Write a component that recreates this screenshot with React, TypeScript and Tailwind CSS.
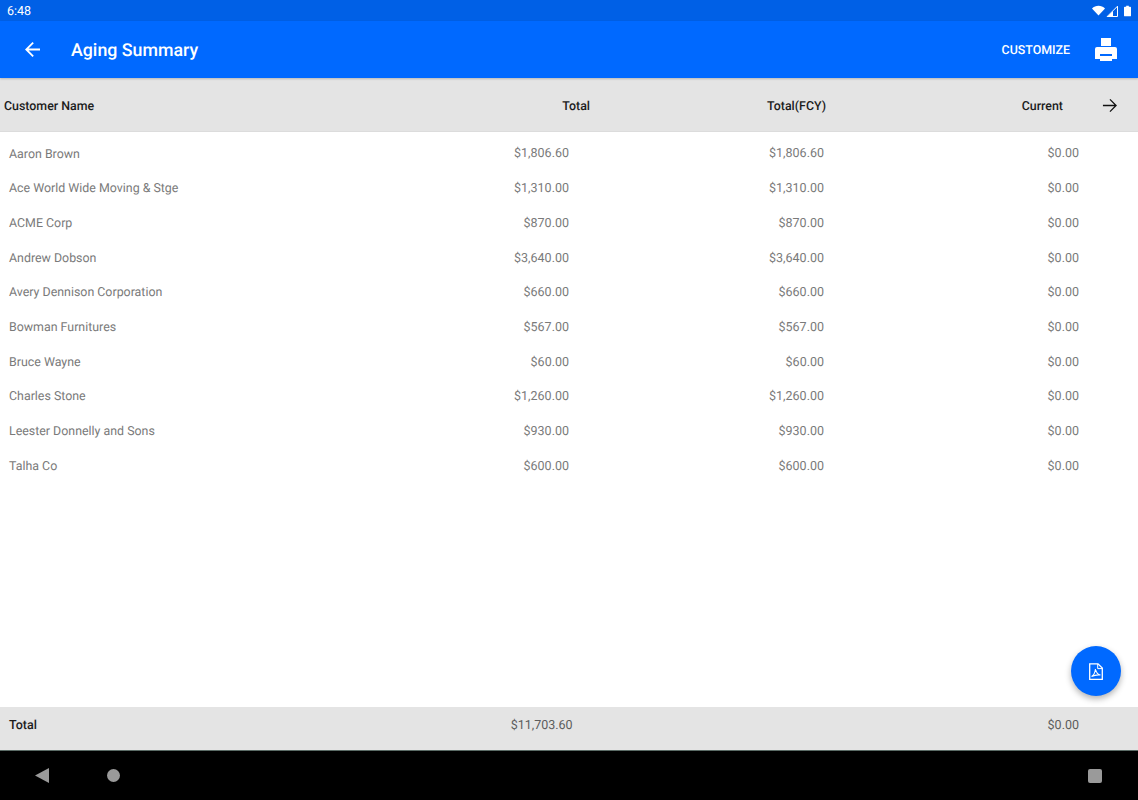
const rows = [
  ['Aaron Brown', '$1,806.60', '$1,806.60', '$0.00'],
  ['Ace World Wide Moving & Stge', '$1,310.00', '$1,310.00', '$0.00'],
  ['ACME Corp', '$870.00', '$870.00', '$0.00'],
  ['Andrew Dobson', '$3,640.00', '$3,640.00', '$0.00'],
  ['Avery Dennison Corporation', '$660.00', '$660.00', '$0.00'],
  ['Bowman Furnitures', '$567.00', '$567.00', '$0.00'],
  ['Bruce Wayne', '$60.00', '$60.00', '$0.00'],
  ['Charles Stone', '$1,260.00', '$1,260.00', '$0.00'],
  ['Leester Donnelly and Sons', '$930.00', '$930.00', '$0.00'],
  ['Talha Co', '$600.00', '$600.00', '$0.00'],
];

function StatusIcons() {
  return (
    <div className="flex items-center">
      {/* wifi */}
      <svg width="13" height="11" viewBox="0 0 14 11" fill="white">
        <path d="M0 3.400C1.900 1.500 4.300.5 7 .5s5.100 1 7 2.900L7 10.800z" />
      </svg>
      {/* signal */}
      <svg width="12" height="12" viewBox="0 0 12 12" fill="none" stroke="white" className="ml-[1px]">
        <path d="M1.200 11.500 11.500 1.200v10.300z" strokeWidth="1" />
        <path d="M1 12 7 6v6z" fill="white" stroke="none" />
      </svg>
      {/* battery */}
      <svg width="7" height="12" viewBox="0 0 8 12" fill="white" className="ml-[6px]">
        <path d="M2.500 0h3v1H7a1 1 0 0 1 1 1v9a1 1 0 0 1-1 1H1a1 1 0 0 1-1-1V2a1 1 0 0 1 1-1h1.500z" />
      </svg>
    </div>
  );
}

function PrintIcon() {
  return (
    <svg width="22" height="23" viewBox="0 0 22 23" fill="white">
      <path d="M6 0h10v8H6z" />
      <path
        fillRule="evenodd"
        d="M2 9h18a2 2 0 0 1 2 2v10h-5v2H5v-2H0V11a2 2 0 0 1 2-2zm3 7v2h12v-2z"
      />
    </svg>
  );
}

function PdfIcon() {
  return (
    <svg width="14" height="17" viewBox="0 0 14 17" fill="none" stroke="white" strokeWidth="1.300">
      <path d="M.7.8h8.300l4.300 4.300v11.200H.7z" />
      <path d="M8.700 1v4.600h4.600" strokeWidth="1" />
      <path d="M2.500 13.500c2-1 3.500-4 4-7.500.5 3 2.500 5.500 5 6-2.500-.3-6.500.3-9 1.500z" strokeWidth="1.100" />
    </svg>
  );
}

export default function App() {
  return (
    <div className="relative h-[800px] w-[1138px] flex flex-col overflow-hidden bg-white font-['Roboto',sans-serif] [text-rendering:geometricPrecision]">
      {/* Status bar */}
      <div className="h-[21px] shrink-0 flex items-center justify-between pl-[7px] pr-[7px] bg-[#0060e6] text-white text-[12.500px]">
        <span className="pt-[4px]">6:48</span>
        <StatusIcons />
      </div>

      {/* App bar */}
      <header className="h-[57px] shrink-0 flex items-center bg-[#0069ff] text-white shadow-[0_1px_2px_rgba(0,0,0,0.2)] z-10">
        <svg width="15" height="15" viewBox="0 0 16 16" fill="white" className="ml-[25px]">
          <path d="M16 7H3.800l5.600-5.600L8 0 0 8l8 8 1.400-1.400L3.800 9H16z" />
        </svg>
        <h1 className="ml-[31px] pt-[4px] text-[17.800px] font-medium">Aging Summary</h1>
        <span className="ml-auto mr-[1px] pt-[3px] text-[12.400px] font-medium">CUSTOMIZE</span>
        <div className="ml-[24px] mr-[21px]">
          <PrintIcon />
        </div>
      </header>

      {/* Column titles */}
      <div className="h-[54px] shrink-0 flex items-center pl-[4px] pt-[1px] bg-[#e4e4e4] text-[12.400px] font-medium text-[#1c1c1c] border-b border-[#dcdcdc]">
        <span className="flex-1 mt-[4px]">Customer Name</span>
        <span className="w-[236px] mt-[4px] text-right">Total</span>
        <span className="w-[236px] mt-[4px] text-right">Total(FCY)</span>
        <span className="w-[237px] mt-[4px] text-right">Current</span>
        <svg width="15" height="15" viewBox="0 0 16 16" fill="none" stroke="#111" strokeWidth="1.400" className="ml-[39px] mr-[21px] mt-[1px]">
          <path d="M1 8h14M8.500 1.500 15 8l-6.500 6.500" />
        </svg>
      </div>

      {/* Rows */}
      <div className="flex-1 min-h-0 pt-[5.500px] text-[12.400px] text-[#7a7a7a]">
        {rows.map((r) => (
          <div key={r[0]} className="h-[34.700px] flex items-center pl-[9px] pr-[59px]">
            <span className="flex-1">{r[0]}</span>
            <span className="w-[255px] text-right text-[12.500px]">{r[1]}</span>
            <span className="w-[255px] text-right text-[12.500px]">{r[2]}</span>
            <span className="w-[255px] text-right text-[12.500px]">{r[3]}</span>
          </div>
        ))}
      </div>

      {/* Totals */}
      <div className="h-[43px] shrink-0 flex items-center pl-[9px] pr-[59px] pb-[5px] bg-[#e4e4e4] text-[12.500px] text-[#5c5c5c]">
        <span className="flex-1 font-medium text-[#1c1c1c]">Total</span>
        <span className="text-right mr-[475px]">$11,703.60</span>
        <span className="text-right">$0.00</span>
      </div>

      {/* Android nav bar */}
      <div className="h-[50px] shrink-0 flex items-center bg-black border-t border-[#5b6b66]">
        <svg width="14" height="15" viewBox="0 0 14 15" fill="#9a9a9a" className="ml-[35px]">
          <path d="M14 0v15L0 7.500z" />
        </svg>
        <div className="ml-[58px] w-[13px] h-[13px] rounded-full bg-[#9a9a9a]" />
        <div className="ml-auto mr-[36px] w-[14px] h-[14px] rounded-[2px] bg-[#9a9a9a]" />
      </div>

      {/* PDF button */}
      <button className="absolute left-[1071px] top-[646px] w-[50px] h-[50px] rounded-full bg-[#0069ff] flex items-center justify-center shadow-[0_3px_6px_rgba(0,0,0,0.3)]">
        <PdfIcon />
      </button>
    </div>
  );
}
